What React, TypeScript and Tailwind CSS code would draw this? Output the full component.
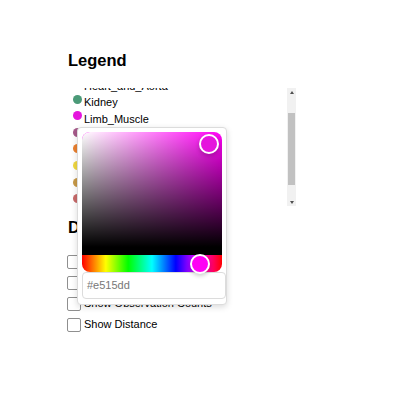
import React from 'react';

interface LegendItem {
  name: string;
  color: string;
}

const legend: LegendItem[] = [
  { name: 'Heart_and_Aorta', color: '#a9a4c9' },
  { name: 'Kidney', color: '#4b9a78' },
  { name: 'Limb_Muscle', color: '#e515dd' },
  { name: 'Liver', color: '#a65a8a' },
  { name: 'Lung', color: '#ea8030' },
  { name: 'Mammary_Gland', color: '#f0d840' },
  { name: 'Marrow', color: '#c89a48' },
  { name: 'Pancreas', color: '#c86a6a' },
  { name: 'Skin', color: '#7a8fc8' },
];

const options = ['Show Cell Types', 'Show Tissues', 'Show Observation Counts', 'Show Distance'];

const ColorPopover: React.FC = () => (
  <div className="absolute left-[77px] top-[127px] w-[150px] h-[178px] bg-white border border-[#dcdcdc] rounded-[4px] p-[4px] shadow-[0_2px_6px_rgba(0,0,0,0.15)]">
    {/* saturation */}
    <div className="relative h-[123px] rounded-t-[8px] border-b-[8px] border-black bg-[#ff00f5] bg-[linear-gradient(to_top,#000,rgba(0,0,0,0)),linear-gradient(to_right,#fff,rgba(255,255,255,0))]">
      <div className="absolute left-[117px] top-[2px] w-[20px] h-[20px] rounded-full border-2 border-white bg-[#e515dd] shadow-[0_2px_4px_rgba(0,0,0,0.2)]"></div>
    </div>
    {/* hue */}
    <div className="relative h-[17px] rounded-b-[8px] bg-[linear-gradient(to_right,#f00_0%,#ff0_17%,#0f0_33%,#0ff_50%,#00f_67%,#f0f_83%,#f00_100%)]">
      <div className="absolute left-[108px] top-[-1.5px] w-[20px] h-[20px] rounded-full border-2 border-white bg-[#ff00f5] shadow-[0_2px_4px_rgba(0,0,0,0.2)]"></div>
    </div>
    <div className="w-[144px] h-[27px] border border-[#dcdcdc] rounded-[4px] pl-[4px] flex items-center text-[11px] text-[#777]">
      #e515dd
    </div>
  </div>
);

export default function App() {
  return (
    <div className="relative w-[400px] h-[400px] bg-white font-['Liberation_Sans',Arial,sans-serif] text-black">
      <div className="w-[296px] h-[341px] overflow-hidden pl-[68px] pt-[51px]">
        <h3 className="text-[16.5px] leading-[19px] font-bold">Legend</h3>

        <div className="mt-[18px] h-[118px] flex">
          <div className="flex-1 overflow-hidden pl-[5px]">
            <div className="mt-[-10.5px]">
              {legend.map((item) => (
                <div key={item.name} className="flex h-[16.6px] text-[11px] leading-[16.6px]">
                  <span className="mt-[0.5px] w-[9px] h-[9px] rounded-full shrink-0" style={{ backgroundColor: item.color }}></span>
                  <span className="ml-[2px]">{item.name}</span>
                </div>
              ))}
            </div>
          </div>
          {/* scrollbar */}
          <div className="w-[9px] bg-[#f1f1f1] flex flex-col items-center">
            <div className="h-[8px] flex items-center justify-center">
              <div className="w-0 h-0 border-l-[2.5px] border-r-[2.5px] border-b-[3px] border-l-transparent border-r-transparent border-b-[#505050]"></div>
            </div>
            <div className="mt-[17px] w-[7px] h-[72px] bg-[#c1c1c1]"></div>
            <div className="flex-1"></div>
            <div className="h-[8px] flex items-center justify-center">
              <div className="w-0 h-0 border-l-[2.5px] border-r-[2.5px] border-t-[3px] border-l-transparent border-r-transparent border-t-[#505050]"></div>
            </div>
          </div>
        </div>

        <h3 className="mt-[12px] text-[16.5px] leading-[19px] font-bold">Display</h3>

        <div className="mt-[14px]">
          {options.map((label) => (
            <div key={label} className="flex items-center h-[21px] text-[11px]">
              <span className="ml-[-1px] w-[14px] h-[14px] border border-[#8f8f8f] rounded-[2px] bg-white shrink-0"></span>
              <span className="ml-[3px]">{label}</span>
            </div>
          ))}
          <div className="mt-[4px] pl-[16px] text-[11px] leading-[16px]">Point size</div>
        </div>
      </div>

      <ColorPopover />
    </div>
  );
}
